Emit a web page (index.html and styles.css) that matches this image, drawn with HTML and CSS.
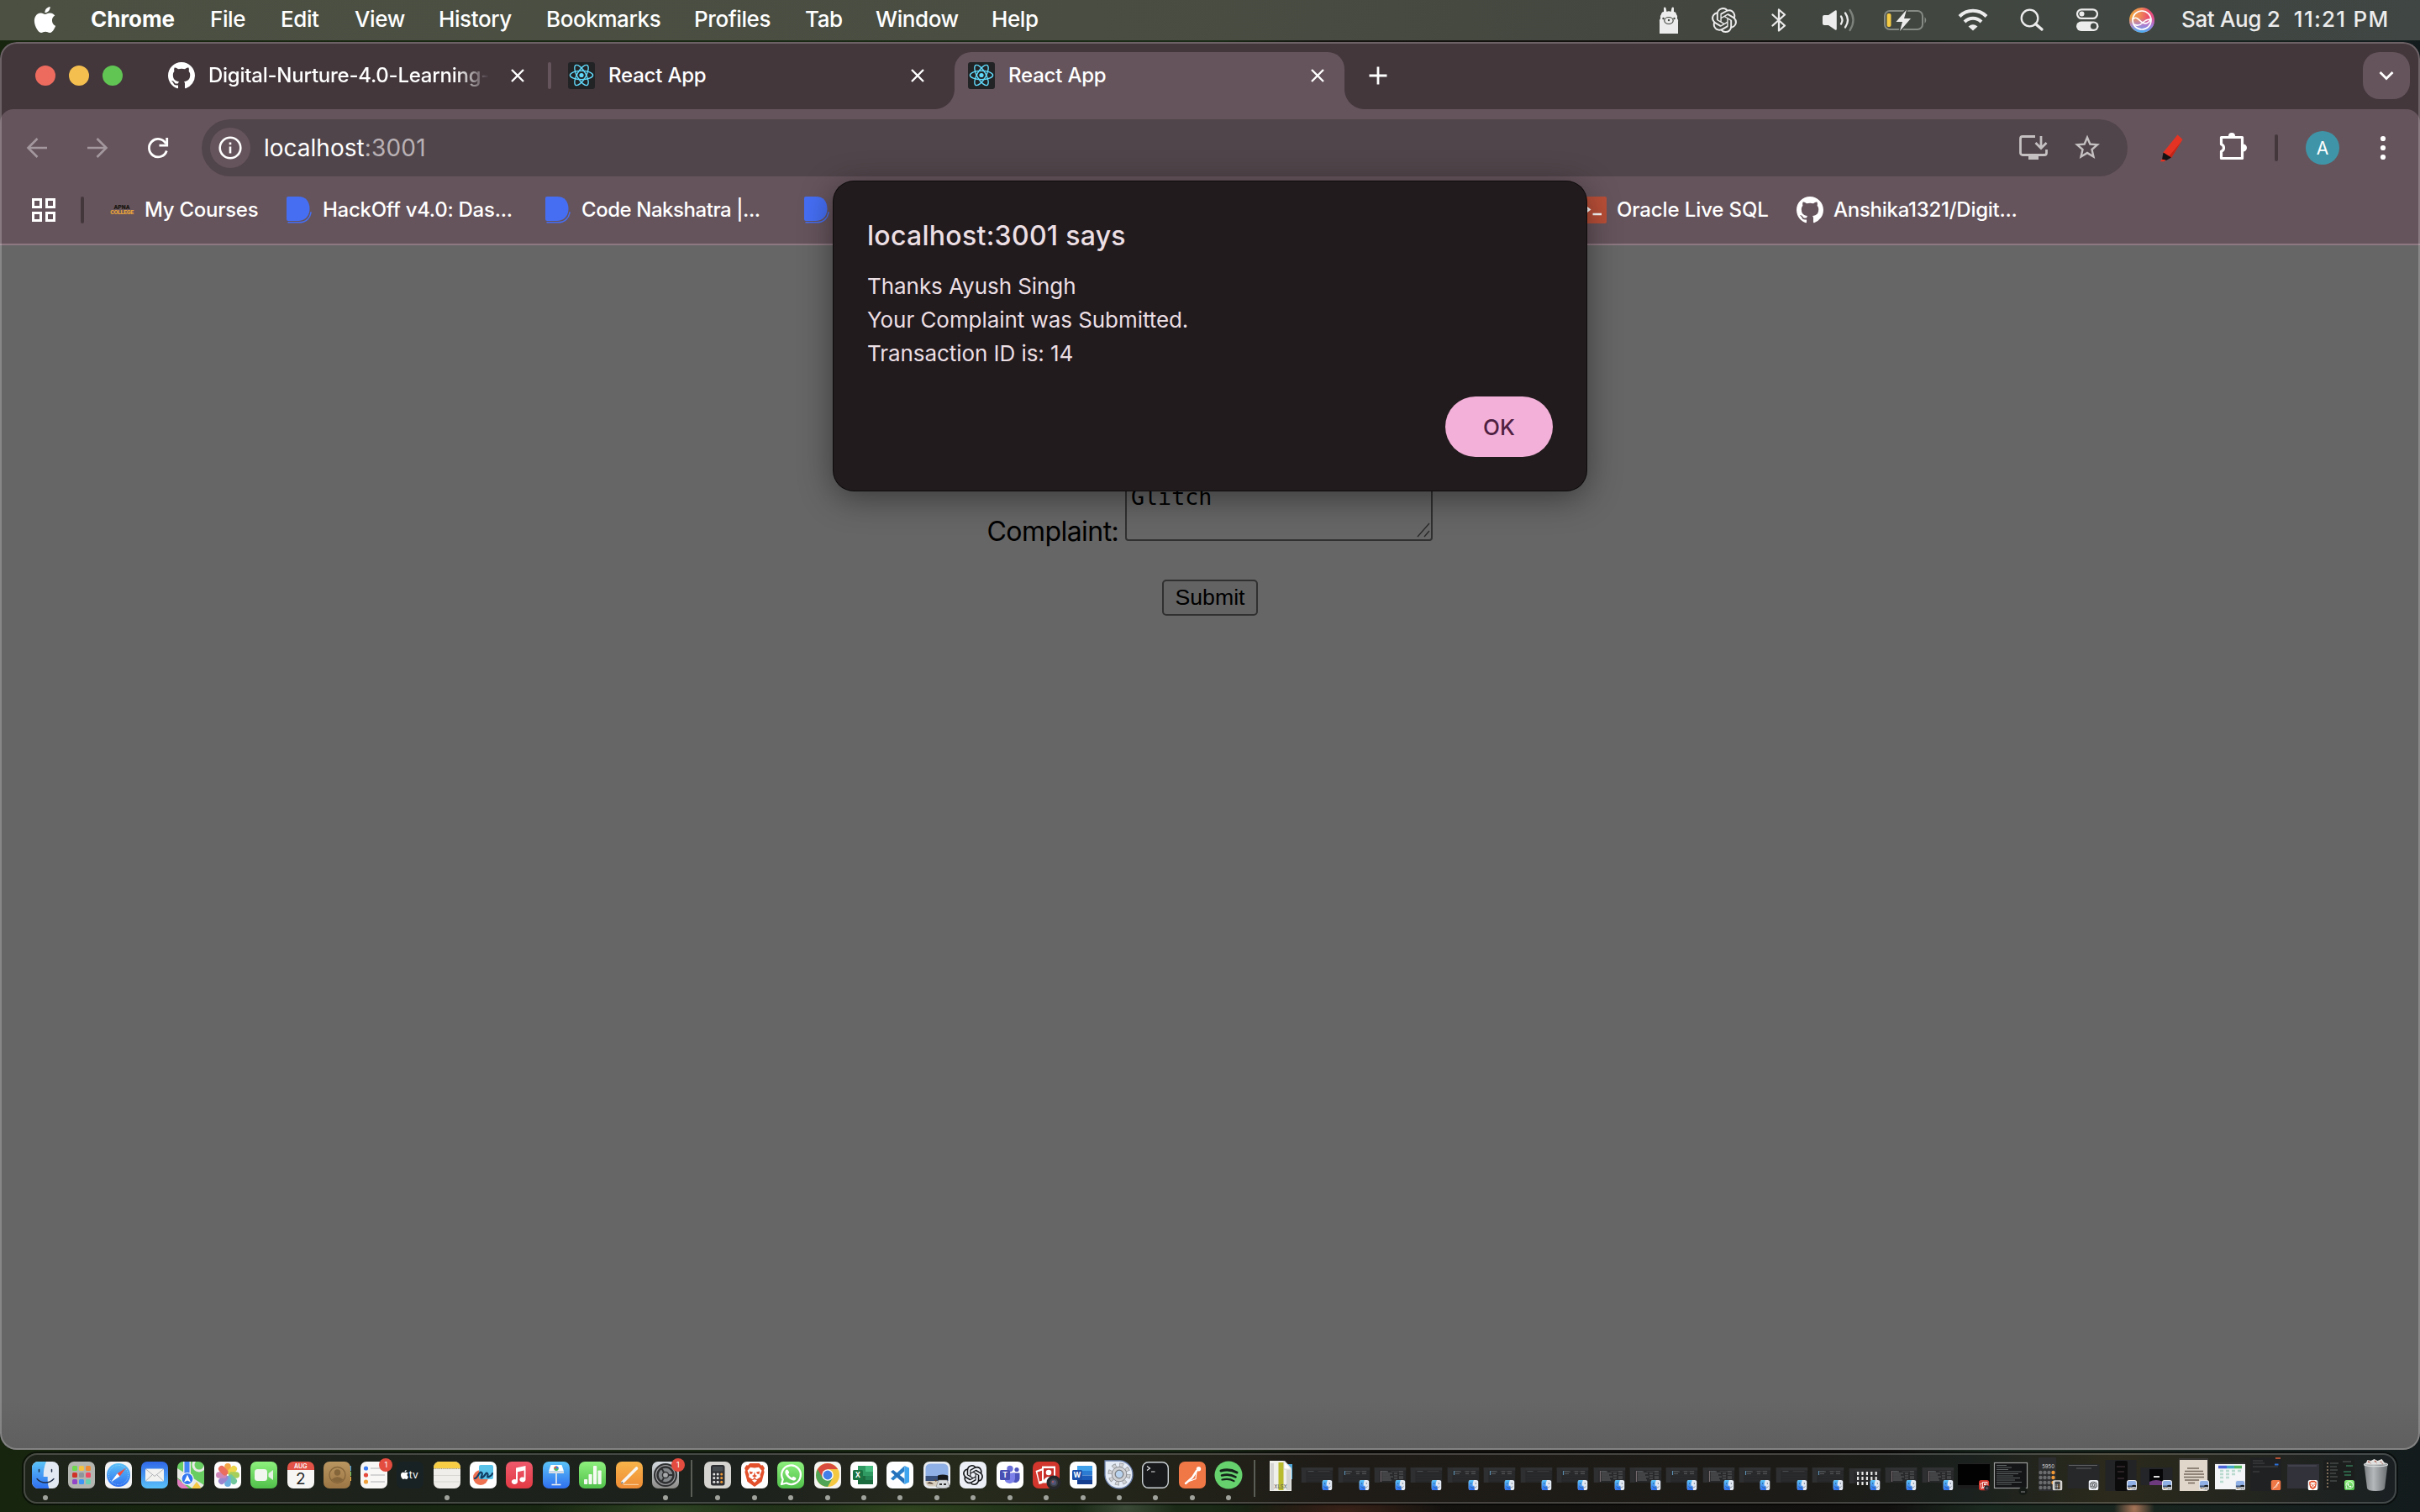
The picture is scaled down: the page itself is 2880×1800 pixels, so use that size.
FILE: index.html
```
<!DOCTYPE html>
<html lang="en">
<head>
<meta charset="utf-8">
<title>React App</title>
<link rel="stylesheet" href="styles.css">
</head>
<body>
<svg class="defs" width="0" height="0" aria-hidden="true">
  <defs>
    <linearGradient id="gBlue" x1="0" y1="0" x2="0" y2="1"><stop offset="0" stop-color="#5bc3f7"/><stop offset="1" stop-color="#2f6ff0"/></linearGradient>
    <linearGradient id="gMail" x1="0" y1="0" x2="0" y2="1"><stop offset="0" stop-color="#3068e8"/><stop offset="1" stop-color="#5ac1fa"/></linearGradient>
    <linearGradient id="gGreen" x1="0" y1="0" x2="0" y2="1"><stop offset="0" stop-color="#8df07d"/><stop offset="1" stop-color="#50c04a"/></linearGradient>
    <linearGradient id="gRed" x1="0" y1="0" x2="0" y2="1"><stop offset="0" stop-color="#ee5a6c"/><stop offset="1" stop-color="#e23a44"/></linearGradient>
    <linearGradient id="gOrange" x1="0" y1="0" x2="0" y2="1"><stop offset="0" stop-color="#f8b44a"/><stop offset="1" stop-color="#ee8c35"/></linearGradient>
    <linearGradient id="gGrey" x1="0" y1="0" x2="0" y2="1"><stop offset="0" stop-color="#d5dbe0"/><stop offset="1" stop-color="#8b8b88"/></linearGradient>
    <linearGradient id="gTan" x1="0" y1="0" x2="0" y2="1"><stop offset="0" stop-color="#b99560"/><stop offset="1" stop-color="#9c7644"/></linearGradient>
    <linearGradient id="gTrash" x1="0" y1="0" x2="1" y2="0"><stop offset="0" stop-color="#7d8183"/><stop offset=".4" stop-color="#b4b8ba"/><stop offset="1" stop-color="#696d70"/></linearGradient>
    <linearGradient id="gSiri" x1="0" y1="0" x2="1" y2=".1"><stop offset="0" stop-color="#eda63c"/><stop offset=".45" stop-color="#ee8a55"/><stop offset=".8" stop-color="#ec4a6c"/><stop offset="1" stop-color="#e0508f"/></linearGradient>
    <linearGradient id="gSiriLow" x1="0" y1="0" x2="0" y2="1"><stop offset=".4" stop-color="#a579ea" stop-opacity="0"/><stop offset=".7" stop-color="#9a86ee" stop-opacity=".8"/><stop offset="1" stop-color="#3fb6f6"/></linearGradient>
    <symbol id="github" viewBox="0 0 16 16"><path fill="#fff" d="M8 0C3.58 0 0 3.58 0 8c0 3.54 2.29 6.53 5.47 7.59.4.07.55-.17.55-.38 0-.19-.01-.82-.01-1.49-2.01.37-2.53-.49-2.69-.94-.09-.23-.48-.94-.82-1.13-.28-.15-.68-.52-.01-.53.63-.01 1.08.58 1.23.82.72 1.21 1.87.87 2.33.66.07-.52.28-.87.51-1.07-1.78-.2-3.64-.89-3.64-3.95 0-.87.31-1.59.82-2.15-.08-.2-.36-1.02.08-2.12 0 0 .67-.21 2.2.82.64-.18 1.32-.27 2-.27s1.36.09 2 .27c1.53-1.04 2.2-.82 2.2-.82.44 1.1.16 1.92.08 2.12.51.56.82 1.27.82 2.15 0 3.07-1.87 3.75-3.65 3.95.29.25.54.73.54 1.48 0 1.07-.01 1.93-.01 2.2 0 .21.15.46.55.38A8.01 8.01 0 0 0 16 8c0-4.42-3.58-8-8-8"/></symbol>
    <symbol id="react" viewBox="0 0 32 32"><rect width="32" height="32" rx="3" fill="#222325"/><g fill="none" stroke="#61dafb" stroke-width="1.400"><ellipse cx="16" cy="15.500" rx="13.600" ry="5.200"/><ellipse cx="16" cy="15.500" rx="13.600" ry="5.200" transform="rotate(60 16 15.500)"/><ellipse cx="16" cy="15.500" rx="13.600" ry="5.200" transform="rotate(120 16 15.500)"/></g><circle cx="16" cy="15.500" r="2.600" fill="#61dafb"/></symbol>
    <symbol id="close" viewBox="0 0 24 24"><path d="M5 5l14 14M19 5L5 19" stroke="#fff" stroke-width="2.400"/></symbol>
    <symbol id="dmark" viewBox="0 0 30 32"><path fill="#456ef3" d="M2 0h12c9 0 13.500 6 13.500 14.500S22 29 14 29H2a2 2 0 0 1-2-2V2a2 2 0 0 1 2-2z"/><path fill="none" stroke="#456ef3" stroke-width="1.500" d="M1.500 30.800H15c8 0 13.500-5 14-12.500"/></symbol>
    <symbol id="openai" viewBox="0 0 24 24"><path d="M22.2819 9.8211a5.9847 5.9847 0 0 0-.5157-4.9108 6.0462 6.0462 0 0 0-6.5098-2.9A6.0651 6.0651 0 0 0 4.9807 4.1818a5.9847 5.9847 0 0 0-3.9977 2.9 6.0462 6.0462 0 0 0 .7427 7.0966 5.98 5.98 0 0 0 .511 4.9107 6.051 6.051 0 0 0 6.5146 2.9001A5.9847 5.9847 0 0 0 13.2599 24a6.0557 6.0557 0 0 0 5.7718-4.2058 5.9894 5.9894 0 0 0 3.9977-2.9001 6.0557 6.0557 0 0 0-.7475-7.0729zm-9.022 12.6081a4.4755 4.4755 0 0 1-2.8764-1.0408l.1419-.0804 4.7783-2.7582a.7948.7948 0 0 0 .3927-.6813v-6.7369l2.02 1.1686a.071.071 0 0 1 .038.052v5.5826a4.504 4.504 0 0 1-4.4945 4.4944zm-9.6607-4.1254a4.4708 4.4708 0 0 1-.5346-3.0137l.142.0852 4.783 2.7582a.7712.7712 0 0 0 .7806 0l5.8428-3.3685v2.3324a.0804.0804 0 0 1-.0332.0615L9.74 19.9502a4.4992 4.4992 0 0 1-6.1408-1.6464zM2.3408 7.8956a4.485 4.485 0 0 1 2.3655-1.9728V11.6a.7664.7664 0 0 0 .3879.6765l5.8144 3.3543-2.0201 1.1685a.0757.0757 0 0 1-.071 0l-4.8303-2.7865A4.504 4.504 0 0 1 2.3408 7.872zm16.5963 3.8558L13.1038 8.364 15.1192 7.2a.0757.0757 0 0 1 .071 0l4.8303 2.7913a4.4944 4.4944 0 0 1-.6765 8.1042v-5.6772a.79.79 0 0 0-.407-.667zm2.0107-3.0231l-.142-.0852-4.7735-2.7818a.7759.7759 0 0 0-.7854 0L9.409 9.2297V6.8974a.0662.0662 0 0 1 .0284-.0615l4.8303-2.7866a4.4992 4.4992 0 0 1 6.6802 4.66zM8.3065 12.863l-2.02-1.1638a.0804.0804 0 0 1-.038-.0567V6.0742a4.4992 4.4992 0 0 1 7.3757-3.4537l-.142.0805L8.704 5.459a.7948.7948 0 0 0-.3927.6813zm1.0976-2.3654l2.602-1.4998 2.6069 1.4998v2.9994l-2.5974 1.4997-2.6067-1.4997Z"/></symbol>
    <symbol id="apple" viewBox="0 0 24 24"><path fill="#fff" d="M12.152 6.896c-.948 0-2.415-1.078-3.96-1.04-2.04.027-3.91 1.183-4.961 3.014-2.117 3.675-.546 9.103 1.519 12.09 1.013 1.454 2.208 3.09 3.792 3.039 1.52-.065 2.09-.987 3.935-.987 1.831 0 2.35.987 3.96.948 1.637-.026 2.676-1.48 3.676-2.948 1.156-1.688 1.636-3.325 1.662-3.415-.039-.013-3.182-1.221-3.22-4.857-.026-3.04 2.48-4.494 2.597-4.559-1.429-2.09-3.623-2.324-4.39-2.376-2-.156-3.675 1.09-4.61 1.09zM15.53 3.83c.843-1.012 1.4-2.427 1.245-3.83-1.207.052-2.662.805-3.532 1.818-.78.896-1.454 2.338-1.273 3.714 1.338.104 2.715-.688 3.559-1.701"/></symbol>
    <symbol id="finder" viewBox="0 0 32 32"><rect width="32" height="32" rx="7.500" fill="#e3e9f2"/><path fill="url(#gBlue)" d="M7.500 0H17c-2.500 6-3.300 11-3.300 18h5c-.2 5 .3 9.500 1.500 14H7.500A7.500 7.500 0 0 1 0 24.500v-17A7.500 7.500 0 0 1 7.500 0z"/><path d="M8.500 9.500v2.600M23.500 9.500v2.600" stroke="#1c2b45" stroke-width="1.500" stroke-linecap="round"/><path d="M6 20.500c5 6 15 6 20 0" fill="none" stroke="#1c2b45" stroke-width="1.300" stroke-linecap="round"/></symbol>
    <symbol id="shot" viewBox="0 0 32 32"><rect width="32" height="32" rx="7" fill="#e9ecf0"/><path fill="#8fb0e6" d="M2.500 8a5.500 5.500 0 0 1 5.500-5.500h16A5.500 5.500 0 0 1 29.500 8v9h-27z"/><path fill="#37517c" d="M2.500 17h27v6h-27z"/><path fill="#d8cfc0" d="M2.500 23h27v1a5.500 5.500 0 0 1-5.500 5.500H8A5.500 5.500 0 0 1 2.500 24z"/><path fill="#5b4a3c" d="M4 26l3-2 3 1 2 2zM12 21l4 1-1 2z"/><path fill="#16181a" d="M17 16.500q6-2 12 0V22H17z"/><path fill="#d7dadd" stroke="#777" stroke-width=".6" d="M18 22h10l3 8q-8 3.500-16 0z"/><path fill="#333" d="M19 26h3v2h-3zM24 26h3v2h-3z"/></symbol>
    <symbol id="brave" viewBox="0 0 32 32"><rect width="32" height="32" rx="7" fill="#fff"/><path fill="#e2502c" d="M10.500 2h11l2.300 2.500 2-.3L28 8l-1 2 .6 2.600-3 11.200L16 30l-8.600-6.200-3-11.200L5 10 4 8l2.200-3.800 2 .3z"/><path fill="#fff" d="M16 7.500l5-.8 3.500 4-2 5 .5 2.500-4.500 3L16 19l-2.500 2.200-4.500-3 .5-2.500-2-5 3.500-4z"/><path fill="#e2502c" d="M10 11.500l4 1-1 2-2.500.5zM22 11.500l-4 1 1 2 2.500.5zM16 12l1 4 2 1-3 2-3-2 2-1z"/><path fill="#fff" d="M16 21l3 1.600-3 2.400-3-2.400z"/></symbol>
    <symbol id="whatsapp" viewBox="0 0 32 32"><rect width="32" height="32" rx="7" fill="url(#gGreen)"/><path fill="none" stroke="#fff" stroke-width="2.300" stroke-linejoin="round" d="M5 27l1.700-5.800A11.300 11.300 0 1 1 11 25.500z"/><path fill="#fff" d="M12.300 9.800c-.6-.5-1.500-.4-2 .2-2 2.500-.4 6 2.300 8.800s6 4.600 8.700 3.100c.9-.5 1.300-1.700 1-2.500-.1-.4-2.700-1.700-3.200-1.700-.7 0-1.200 1.500-1.700 1.500-1.300-.3-4-2.800-4.300-4.200 0-.5 1.200-1 1.100-1.900-.1-.6-1.200-2.800-1.900-3.300z"/></symbol>
    <symbol id="calc" viewBox="0 0 32 32"><rect width="32" height="32" rx="7" fill="#d5d4d1"/><rect x="8" y="4" width="16.500" height="24.500" rx="2.500" fill="#2e3033"/><rect x="10" y="6" width="12.500" height="5.500" rx="1" fill="#464b50"/><g fill="#e4e4e4"><circle cx="11.800" cy="15" r="1.500"/><circle cx="16.200" cy="15" r="1.500"/><circle cx="11.800" cy="19.600" r="1.500"/><circle cx="16.200" cy="19.600" r="1.500"/><circle cx="11.800" cy="24.200" r="1.500"/><circle cx="16.200" cy="24.200" r="1.500"/></g><g fill="#f19a37"><circle cx="20.700" cy="15" r="1.500"/><circle cx="20.700" cy="19.600" r="1.500"/><circle cx="20.700" cy="24.200" r="1.500"/></g></symbol>
    <symbol id="gpt" viewBox="0 0 32 32"><rect width="32" height="32" rx="7" fill="#edf1f7"/><use href="#openai" x="4" y="4" width="24" height="24" fill="#15171a"/></symbol>
    <symbol id="booth" viewBox="0 0 34 34"><rect width="32" height="32" rx="7" fill="#d2362d"/><path fill="#fff" d="M3.500 11l8-3v18l-4 1z"/><path fill="#d2362d" d="M5.500 12.500l6-2v12l-3.500 1z"/><rect x="11" y="5.500" width="16" height="20" fill="#fff"/><rect x="13" y="8" width="12" height="14" fill="#c5302a"/><circle cx="19" cy="13" r="3.300" fill="#fff"/><path fill="#fff" d="M13 22q6-8 12 0z"/><circle cx="25" cy="25" r="8.500" fill="#26272a"/><circle cx="25" cy="25" r="5" fill="#3c4046"/><circle cx="25" cy="25" r="3" fill="#50557a"/><circle cx="24" cy="24" r="1.200" fill="#a65a60"/></symbol>
    <symbol id="postman" viewBox="0 0 32 32"><rect width="32" height="32" rx="7" fill="#f07746"/><circle cx="23.500" cy="8.700" r="2.700" fill="#fff"/><path d="M21 11l-5 8-8 7" fill="none" stroke="#fff" stroke-width="2.400" stroke-linecap="round"/><path d="M21 11.500l-1 9-8 3" fill="none" stroke="#fff" stroke-width="1.100"/></symbol>
    <symbol id="win" viewBox="0 0 38 18"><rect width="38" height="18" fill="#262728"/><rect width="38" height="3.500" fill="#303132"/><rect width="6" height="18" fill="#2e2f30"/><path d="M7 6h30M7 9h30M7 12h30M7 15h30" stroke="#303132" stroke-width=".8"/><path d="M8 4.500h7" stroke="#50575c" stroke-width=".8"/><path d="M20 4.500h14" stroke="#3d3e3f" stroke-width=".8"/></symbol>
    <symbol id="winA" viewBox="0 0 43 60"><use href="#win" x="2.500" y="17" width="38" height="18"/><use href="#finder" x="27.500" y="32" width="12" height="12"/></symbol>
    <symbol id="winB" viewBox="0 0 43 60"><use href="#win" x="2.500" y="17" width="38" height="18"/><path d="M10.500 21v5" stroke="#5b8fb0" stroke-width="1.200"/><path d="M12 22h7M12 24.500h5M24 22h4M24 24.500h4M31 22h5M31 24.500h5" stroke="#545658" stroke-width="1"/><use href="#finder" x="27.500" y="32" width="12" height="12"/></symbol>
    <symbol id="winC" viewBox="0 0 43 60"><use href="#win" x="2.500" y="17" width="38" height="18"/><path d="M10.500 21v13" stroke="#776c6f" stroke-width="1.200"/><path d="M12 22h7M12 24h12M12 26h9M12 28h13M12 30h10M12 32h11M26 24h4M26 27h4M26 30h4M32 22h5M32 25h5M32 28h5M32 30h5" stroke="#5c5e60" stroke-width="1"/><use href="#finder" x="27.500" y="32" width="12" height="12"/></symbol>
  </defs>
</svg>

<header class="menubar">
  <svg class="menubar-apple" viewBox="0 0 24 24"><use href="#apple"/></svg>
  <nav class="menus">
    <span class="menu menu-app">Chrome</span>
    <span class="menu menu-file">File</span>
    <span class="menu menu-edit">Edit</span>
    <span class="menu menu-view">View</span>
    <span class="menu menu-history">History</span>
    <span class="menu menu-bookmarks">Bookmarks</span>
    <span class="menu menu-profiles">Profiles</span>
    <span class="menu menu-tab">Tab</span>
    <span class="menu menu-window">Window</span>
    <span class="menu">Help</span>
  </nav>
  <div class="status">
    <svg width="66" height="48" viewBox="0 0 66 48"><path fill="#ececec" d="M22 40V27q-1-3 1-5-1-3 1-5 .5-3 3-3V9.500q1-2 2.500 0l1 4.500q2.500-1.500 5 0l1-4.500q1.500-2 2.500 0V14q2.500 0 3 3 2 2 1 5 2 2 1 5v13z"/><ellipse cx="33" cy="24.500" rx="5.200" ry="4" fill="none" stroke="#41463f" stroke-width="1.200"/><circle cx="33" cy="24" r="1.200" fill="#41463f"/><circle cx="26.500" cy="22" r="1.200" fill="#41463f"/><circle cx="39.500" cy="22" r="1.200" fill="#41463f"/></svg>
    <svg width="66" height="48" viewBox="0 0 66 48"><use href="#openai" x="18" y="9" width="30" height="30" fill="#ececec"/></svg>
    <svg width="64" height="48" viewBox="0 0 64 48"><path d="M24.500 17.500l14.500 13-7 6V11.500l7 6-14.500 13" fill="none" stroke="#ececec" stroke-width="2.300" stroke-linejoin="round" stroke-linecap="round"/></svg>
    <svg width="78" height="48" viewBox="0 0 78 48"><path fill="#ececec" d="M22 18h5l8-5.500q1.800-.8 1.800 1v21q0 1.800-1.800 1l-8-5.500h-5q-2 0-2-2v-8q0-2 2-2z"/><g fill="none" stroke-width="2.300" stroke-linecap="round"><path stroke="#ececec" d="M42 19.500q3 4.500 0 9M47 15.500q6 8.500 0 17"/><path stroke="#7e827c" d="M52.500 12q8 12 0 24"/></g></svg>
    <svg width="80" height="48" viewBox="0 0 80 48"><rect x="16" y="13" width="45" height="22" rx="6" fill="none" stroke="#868a85" stroke-width="2"/><path fill="#868a85" d="M63.500 20q3.500 4 0 8z"/><rect x="18.500" y="16" width="5" height="16" rx="2" fill="#f5cb45"/><path d="M42 11.500L29.500 26h7.500l-3 11L47 22h-8z" fill="#ececec" stroke="#434843" stroke-width="3" paint-order="stroke"/></svg>
    <svg width="82" height="48" viewBox="0 0 82 48"><g fill="none" stroke="#ececec" stroke-width="4"><path d="M25 19.500a22.500 22.500 0 0 1 32 0"/><path d="M31 26a14 14 0 0 1 20 0"/></g><path fill="#ececec" d="M35.500 31.500q5.500-4.500 11 0L41 36.500z"/></svg>
    <svg width="56" height="48" viewBox="0 0 56 48"><circle cx="26.500" cy="21.500" r="9.800" fill="none" stroke="#ececec" stroke-width="2.300"/><path d="M33.500 28.500l7.500 6.500" stroke="#ececec" stroke-width="3.400" stroke-linecap="round"/></svg>
    <svg width="78" height="48" viewBox="0 0 78 48"><rect x="27" y="11.300" width="24" height="10.600" rx="5.300" fill="none" stroke="#ececec" stroke-width="2.200"/><circle cx="32.500" cy="16.600" r="3" fill="#ececec"/><rect x="26" y="25.500" width="26.500" height="11.500" rx="5.750" fill="#ececec"/><circle cx="46.500" cy="31.200" r="3.600" fill="#414743"/></svg>
    <svg width="52" height="48" viewBox="0 0 52 48"><circle cx="26" cy="24" r="15" fill="url(#gSiri)"/><circle cx="26" cy="24" r="15" fill="url(#gSiriLow)"/><circle cx="26" cy="24" r="11" fill="none" stroke="#fff" stroke-width="1.700"/><path d="M15 23c5-5 8 2 12 4s8 0 9-4c-4 0-6 1-9 4s-7 4-10 2" fill="none" stroke="#fff" stroke-width="1.700"/></svg>
    <span class="clock"><span>Sat Aug 2</span><span class="time">11:21 PM</span></span>
  </div>
</header>

<main class="window">
  <div class="tabstrip">
    <div class="lights"><i class="red"></i><i class="yellow"></i><i class="green"></i></div>
    <div class="tab">
      <svg class="favicon"><use href="#github"/></svg>
      <span class="tab-title fade">Digital-Nurture-4.0-Learning-</span>
      <svg class="tab-close"><use href="#close"/></svg>
      <span class="tab-divider"></span>
    </div>
    <div class="tab">
      <svg class="favicon"><use href="#react"/></svg>
      <span class="tab-title">React App</span>
      <svg class="tab-close"><use href="#close"/></svg>
    </div>
    <div class="tab active">
      <svg class="favicon"><use href="#react"/></svg>
      <span class="tab-title">React App</span>
      <svg class="tab-close"><use href="#close"/></svg>
    </div>
    <svg class="new-tab" viewBox="0 0 24 24"><path d="M12 1.500v21M1.500 12h21" stroke="#fff" stroke-width="2.800"/></svg>
    <button class="tab-search" aria-label="Search tabs"><svg width="24" height="24" viewBox="0 0 24 24"><path d="M4.500 8l7.500 7.500L19.500 8" fill="none" stroke="#fff" stroke-width="2.800"/></svg></button>
  </div>

  <div class="toolbar">
    <svg class="tool" viewBox="0 0 72 72"><path d="M48 36H26M36.500 25L25.500 36l11 11" fill="none" stroke="#a3989d" stroke-width="2.600"/></svg>
    <svg class="tool" viewBox="0 0 72 72"><path d="M24 36h22M35.500 25l11 11-11 11" fill="none" stroke="#a3989d" stroke-width="2.600"/></svg>
    <svg class="tool" viewBox="0 0 72 72"><path d="M45.500 31A10.700 10.700 0 1 0 46.300 39.500" fill="none" stroke="#fff" stroke-width="2.800"/><path d="M46.700 24v9.200H37.500" fill="none" stroke="#fff" stroke-width="2.800"/></svg>
    <div class="omnibox">
      <span class="site-info"><svg width="28" height="28" viewBox="0 0 28 28"><circle cx="14" cy="14" r="12.300" fill="none" stroke="#fff" stroke-width="2.600"/><path d="M14 12.500v8M14 7.500v2.800" stroke="#fff" stroke-width="2.600"/></svg></span>
      <span class="url">localhost<span class="port">:3001</span></span>
      <svg class="omni-icon" viewBox="0 0 64 64"><path d="M34 18.500H19a2.500 2.500 0 0 0-2.500 2.500v17a2.500 2.500 0 0 0 2.500 2.500h26a2.500 2.500 0 0 0 2.500-2.500v-4" fill="none" stroke="#c4bfc1" stroke-width="2.800"/><path fill="#c4bfc1" d="M26 41h12v5H26z"/><path d="M41 18v13M34.500 26l6.500 6.500 6.500-6.500" fill="none" stroke="#c4bfc1" stroke-width="2.800"/></svg>
      <svg class="omni-icon" viewBox="0 0 64 64"><path transform="translate(14 13.500) scale(1.500)" fill="#c4bfc1" d="M22 9.240l-7.190-.62L12 2 9.190 8.630 2 9.240l5.460 4.730L5.820 21 12 17.270 18.180 21l-1.630-7.030L22 9.240zM12 15.400l-3.760 2.270 1-4.280-3.320-2.880 4.380-.38L12 6.100l1.710 4.040 4.380.38-3.320 2.880 1 4.280L12 15.400z"/></svg>
    </div>
    <svg class="tool tool-pen" viewBox="0 0 73 72"><path fill="#e53323" d="M43.500 20.500l6 5.500L36 48 26 42z"/><path fill="#c22417" d="M48 28.500l1.500-2.500L36 48l-3-1.800z"/><path fill="#151213" d="M26.500 41.500l9.500 6-6 3.500-5-1z"/><path fill="#e53323" d="M24.500 49.500l5 1-2 1.700h-4.500z"/></svg>
    <svg class="tool" viewBox="0 0 72 72"><path d="M22.500 23.500h25v25h-25v-8.200a4.600 4.600 0 0 0 0-8.600z" fill="none" stroke="#fff" stroke-width="3.200" stroke-linejoin="round"/><path fill="#fff" d="M31 23v-1a4 4 0 0 1 8 0v1zM48 31.500h.5a4.500 4.500 0 0 1 0 9H48z"/></svg>
    <span class="tool-divider"></span>
    <span class="avatar">A</span>
    <svg class="tool tool-more" viewBox="0 0 72 72"><g fill="#fff"><circle cx="36" cy="25" r="3.100"/><circle cx="36" cy="36" r="3.100"/><circle cx="36" cy="47" r="3.100"/></g></svg>
  </div>

  <div class="bookmarks">
    <svg class="apps" width="28" height="28" viewBox="0 0 28 28"><g fill="none" stroke="#fff" stroke-width="3"><rect x="1.500" y="1.500" width="9" height="9"/><rect x="17.500" y="1.500" width="9" height="9"/><rect x="1.500" y="17.500" width="9" height="9"/><rect x="17.500" y="17.500" width="9" height="9"/></g></svg>
    <span class="bm-divider"></span>
    <div class="bm bm-courses"><span class="apna"><em>APNA</em><em>COLLEGE</em></span><span class="bm-label">My Courses</span></div>
    <div class="bm bm-mid"><svg class="dmark"><use href="#dmark"/></svg><span class="bm-label">HackOff v4.0: Das...</span></div>
    <div class="bm bm-mid"><svg class="dmark"><use href="#dmark"/></svg><span class="bm-label bm-tight">Code Nakshatra |...</span></div>
    <div class="bm bm-wide"><svg class="dmark"><use href="#dmark"/></svg></div>
    <div class="bm bm-oracle"><svg width="32" height="32" viewBox="0 0 32 32"><rect width="32" height="32" rx="2" fill="#b94f38"/><path d="M5 10.500l6.500 5L5 20.500M15.500 21H26" fill="none" stroke="#fff" stroke-width="2.400"/></svg><span class="bm-label bm-loose">Oracle Live SQL</span></div>
    <div class="bm"><svg width="32" height="32"><use href="#github"/></svg><span class="bm-label">Anshika1321/Digit...</span></div>
  </div>

  <section class="page">
    <div class="complaint"><label for="complaint">Complaint:</label><div class="textarea" id="complaint">Glitch<svg class="grip" width="16" height="18" viewBox="0 0 16 18"><path d="M1 17L15 1M9 17l6-7" stroke="#2b2b2b" stroke-width="1.400"/></svg></div></div>
    <div class="submit">Submit</div>
  </section>

  <div class="dialog" role="dialog">
    <h1>localhost:3001 says</h1>
    <p>Thanks Ayush Singh</p>
    <p>Your Complaint was Submitted.</p>
    <p>Transaction ID is: 14</p>
    <span class="ok">OK</span>
  </div>
</main>

<footer class="dock">
  <div class="app running"><svg><use href="#finder"/></svg></div>
  <div class="app"><svg viewBox="0 0 32 32"><rect width="32" height="32" rx="7" fill="#b3b6b0"/><g><rect x="5" y="5" width="6" height="6" rx="1.500" fill="#6ed84f"/><rect x="13" y="5" width="6" height="6" rx="1.500" fill="#f3c341"/><rect x="21" y="5" width="6" height="6" rx="1.500" fill="#ee8a35"/><rect x="5" y="13" width="6" height="6" rx="1.500" fill="#cf3328"/><rect x="13" y="13" width="6" height="6" rx="1.500" fill="#8f959b"/><rect x="21" y="13" width="6" height="6" rx="1.500" fill="#ee4b63"/><rect x="5" y="21" width="6" height="6" rx="1.500" fill="#9346c8"/><rect x="13" y="21" width="6" height="6" rx="1.500" fill="#3f95f5"/><rect x="21" y="21" width="6" height="6" rx="1.500" fill="#69d1b0"/></g></svg></div>
  <div class="app"><svg viewBox="0 0 32 32"><rect width="32" height="32" rx="7" fill="#f3f3f3"/><circle cx="16" cy="16" r="14" fill="url(#gBlue)"/><circle cx="16" cy="16" r="11.500" fill="none" stroke="#bfe2fb" stroke-width="1" stroke-dasharray=".7 1.700"/><path fill="#f24c3e" d="M25 7.500L14.500 14.200l3 3.400z"/><path fill="#fff" d="M7 24.500l7.500-10.300 3 3.400z"/></svg></div>
  <div class="app"><svg viewBox="0 0 32 32"><rect width="32" height="32" rx="7" fill="url(#gMail)"/><rect x="5" y="8.500" width="22" height="15" rx="1.500" fill="#f2f2f0"/><path d="M5.500 9l10.500 8.500L26.500 9M5.500 23l8-7.500M26.500 23l-8-7.500" fill="none" stroke="#a8adb0" stroke-width=".9"/></svg></div>
  <div class="app"><svg viewBox="0 0 32 32"><clipPath id="cm"><rect width="32" height="32" rx="7"/></clipPath><g clip-path="url(#cm)"><path fill="#69ce62" d="M0 0h32v32H0z"/><path fill="#e9e9e6" d="M0 8l32 20v4H18L0 19z"/><path fill="#e27cc0" d="M0 20l14 12H0z"/><path fill="#f5c845" d="M17 32l6-8 6 8z"/><path fill="#e9e9e6" d="M7 0h9v14H7z"/><path fill="#4285f4" d="M8.500 0h6v18h-6z"/><circle cx="26" cy="4" r="7" fill="none" stroke="#e9e9e6" stroke-width="3"/><circle cx="12" cy="20.500" r="7.600" fill="#fff"/><circle cx="12" cy="20.500" r="6.500" fill="#3478f0"/><path fill="#fff" d="M12 15.500l4 9-4-2-4 2z"/></g></svg></div>
  <div class="app"><svg viewBox="0 0 32 32"><rect width="32" height="32" rx="7" fill="#fdfdfd"/><g opacity=".88"><rect x="12.200" y="2" width="7.600" height="13" rx="3.800" fill="#f39a2d"/><rect x="12.200" y="2" width="7.600" height="13" rx="3.800" fill="#ecd233" transform="rotate(45 16 16)"/><rect x="12.200" y="2" width="7.600" height="13" rx="3.800" fill="#9ac845" transform="rotate(90 16 16)"/><rect x="12.200" y="2" width="7.600" height="13" rx="3.800" fill="#5fbf8f" transform="rotate(135 16 16)"/><rect x="12.200" y="2" width="7.600" height="13" rx="3.800" fill="#58a5dd" transform="rotate(180 16 16)"/><rect x="12.200" y="2" width="7.600" height="13" rx="3.800" fill="#8f77c9" transform="rotate(225 16 16)"/><rect x="12.200" y="2" width="7.600" height="13" rx="3.800" fill="#c877ae" transform="rotate(270 16 16)"/><rect x="12.200" y="2" width="7.600" height="13" rx="3.800" fill="#e85a48" transform="rotate(315 16 16)"/></g></svg></div>
  <div class="app"><svg viewBox="0 0 32 32"><rect width="32" height="32" rx="7" fill="url(#gGreen)"/><rect x="5" y="9" width="15" height="14" rx="3.500" fill="#f1f6ef"/><path fill="#e6efe4" d="M21.500 14l5.500-4v12l-5.500-4z"/></svg></div>
  <div class="app calendar"><span>AUG</span><b>2</b></div>
  <div class="app"><svg viewBox="0 0 32 32"><path fill="#3b9ad8" d="M29 5h4v6h-4z"/><path fill="#63c25b" d="M29 12h4v5h-4z"/><path fill="#eaa83c" d="M29 18h4v5h-4z"/><rect width="32" height="32" rx="7" fill="url(#gTan)"/><circle cx="16.500" cy="16" r="9.500" fill="none" stroke="#85653a" stroke-width="1.300"/><circle cx="16.500" cy="13" r="3.700" fill="#85653a"/><path fill="#85653a" d="M9.500 21.500q7-6.500 14 0-7 6-14 0z"/></svg></div>
  <div class="app"><svg viewBox="0 0 32 32"><rect width="32" height="32" rx="7" fill="#f8f7f5"/><circle cx="6.500" cy="8" r="2.600" fill="#3c7bf0"/><circle cx="6.500" cy="16" r="2.600" fill="#e4493c"/><circle cx="6.500" cy="24" r="2.600" fill="#efa03c"/><path d="M12 8h17M12 16h17M12 24h17" stroke="#c9c9c9" stroke-width="1.300"/></svg><span class="badge">1</span></div>
  <div class="app"><svg viewBox="0 0 32 32"><rect width="32" height="32" rx="7" fill="#182225"/><use href="#apple" x="4" y="10" width="11" height="11"/><text x="14.800" y="19.800" class="tv">tv</text></svg></div>
  <div class="app running"><svg viewBox="0 0 32 32"><rect width="32" height="32" rx="7" fill="#efeeea"/><path fill="#f6cd45" d="M0 8V7a7 7 0 0 1 7-7h18a7 7 0 0 1 7 7v1z"/><path d="M0 8.500h32" stroke="#98917c" stroke-dasharray="1 .8"/><path d="M0 16.500h32M0 24h32" stroke="#d2d1cc" stroke-width=".8"/></svg></div>
  <div class="app"><svg viewBox="0 0 32 32"><rect width="32" height="32" rx="7" fill="#fff"/><circle cx="13" cy="19" r="9" fill="#ee7152"/><path fill="#59c3ea" d="M11 6q0-2 2-2h13q2 0 2 2v13q0 2-2 2H13q-2 0-2-2z"/><path d="M6 20c4 0 5-9 8-7s-3 8 1 6 4-7 6-5-2 6 2 4 4-4 4-4" fill="none" stroke="#123d63" stroke-width="2.200" stroke-linecap="round"/></svg></div>
  <div class="app"><svg viewBox="0 0 32 32"><rect width="32" height="32" rx="7" fill="url(#gRed)"/><path fill="#fff" d="M12 7.500l11.500-2.500v16.500a3.600 3 0 1 1-1.800-2.700V10.500L14 12.300V24a3.600 3 0 1 1-2-2.700z"/></svg></div>
  <div class="app"><svg viewBox="0 0 32 32"><rect width="32" height="32" rx="7" fill="url(#gBlue)"/><path fill="#fff" d="M9.500 4h13l2.500 7.500H7z"/><path fill="#d7dde2" d="M7 11.500h18v2.500H7z"/><path d="M16 14v12.500" stroke="#eee" stroke-width="1.600"/><path d="M10.500 27.500h11" stroke="#eee" stroke-width="1.600"/><circle cx="16" cy="8.300" r="2.700" fill="#45b864"/><path fill="#e2574c" d="M16 8.300V5.600a2.700 2.700 0 0 0-2.700 2.700z"/><path fill="#3f7cf0" d="M16 8.300v-2.700a2.700 2.700 0 0 1 2.700 2.700z"/></svg></div>
  <div class="app"><svg viewBox="0 0 32 32"><rect width="32" height="32" rx="7" fill="url(#gGreen)"/><g fill="#f5faf3"><rect x="6" y="21" width="4.200" height="6" rx=".8"/><rect x="11.500" y="15" width="4.200" height="12" rx=".8"/><rect x="17" y="5" width="4.200" height="22" rx=".8"/><rect x="22.500" y="10.500" width="4.200" height="16.500" rx=".8"/></g></svg></div>
  <div class="app"><svg viewBox="0 0 32 32"><rect width="32" height="32" rx="7" fill="url(#gOrange)"/><path d="M8 24.500L24.500 8" stroke="#f7f5f2" stroke-width="3.600" stroke-linecap="round"/><path d="M6 26.500l3-1-2-2z" fill="#777"/><path d="M9 27.300h18" stroke="#fbd9b0" stroke-width="1"/></svg></div>
  <div class="app running"><svg viewBox="0 0 32 32"><rect width="32" height="32" rx="7" fill="url(#gGrey)"/><circle cx="16" cy="16" r="13" fill="#9a9c9d" stroke="#2e3031" stroke-width="2"/><circle cx="16" cy="16" r="9.500" fill="#85888a" stroke="#2e3031" stroke-width="2.500"/><path d="M16 16h9.500M16 16l-5-8.500M16 16l-5 8.500" stroke="#2e3031" stroke-width="2"/><circle cx="16" cy="16" r="3.600" fill="#a9abac" stroke="#2e3031" stroke-width="1.500"/></svg><span class="badge">1</span></div>
  <span class="dock-divider"></span>
  <div class="app running"><svg><use href="#calc"/></svg></div>
  <div class="app running"><svg><use href="#brave"/></svg></div>
  <div class="app running"><svg><use href="#whatsapp"/></svg></div>
  <div class="app running"><svg viewBox="0 0 32 32"><rect width="32" height="32" rx="7" fill="#f4f4f2"/><circle cx="16" cy="16" r="14" fill="#f5c842"/><path fill="#4fa455" d="M16 16L3.880 9A14 14 0 0 0 16 30l6-10.500z"/><path fill="#d94b3d" d="M16 9h12.100A14 14 0 0 0 3.880 9l6 10z"/><circle cx="16" cy="16" r="6.800" fill="#fff"/><circle cx="16" cy="16" r="5.400" fill="#437fe8"/></svg></div>
  <div class="app running"><svg viewBox="0 0 32 32"><rect width="32" height="32" rx="7" fill="#fff"/><path fill="#2f9b62" d="M9 5h18v22H9z"/><path fill="#48bd80" d="M18 5h9v7h-9z"/><path fill="#1c6b3f" d="M9 17h18v10H9z"/><path fill="#268554" d="M18 17h9v5h-9z"/><rect x="3" y="10" width="12" height="12" rx="1.500" fill="#1a7343"/><text x="9" y="19" class="letter">X</text></svg></div>
  <div class="app running"><svg viewBox="0 0 32 32"><rect width="32" height="32" rx="7" fill="#fff"/><path fill="#2a7fc9" d="M21.500 5v6.500L8 22.500l-3-2.200L21.500 5z"/><path fill="#2471ba" d="M21.500 27v-6.500L8 10l-3 2L21.500 27z"/><path fill="#3ea5ee" d="M21.500 5l5.500 2.500v17L21.500 27z"/></svg></div>
  <div class="app running"><svg><use href="#shot"/></svg></div>
  <div class="app running"><svg><use href="#gpt"/></svg></div>
  <div class="app running"><svg viewBox="0 0 32 32"><rect width="32" height="32" rx="7" fill="#fff"/><circle cx="16" cy="8.500" r="3.700" fill="#6a6fd8"/><circle cx="24" cy="9.500" r="2.600" fill="#4d54bb"/><path fill="#4d54bb" d="M19 13.500h8.500v7a5 5 0 0 1-8.500 3z"/><path fill="#7b81e8" d="M10 13.500h12V20a6.500 6.500 0 0 1-12 3z"/><rect x="4" y="10" width="12" height="12" rx="1.500" fill="#4850b4"/><text x="10" y="19" class="letter">T</text></svg></div>
  <div class="app running"><svg><use href="#booth" width="34" height="34"/></svg></div>
  <div class="app running"><svg viewBox="0 0 32 32"><rect width="32" height="32" rx="7" fill="#fff"/><path fill="#41a0ea" d="M9 5h18v6H9z"/><path fill="#2b7bd3" d="M9 11h18v5.500H9z"/><path fill="#1c5cb8" d="M9 16.500h18V22H9z"/><path fill="#163f90" d="M9 22h18v5H9z"/><rect x="3" y="10" width="12" height="12" rx="1.500" fill="#1b52ab"/><text x="9" y="19" class="letter">W</text></svg></div>
  <div class="app running"><svg viewBox="0 0 32 32"><path fill="#e6ecf6" stroke="#6c82ad" stroke-width="1.300" d="M-1-1h18A16.500 16.500 0 1 1-1 16z"/><circle cx="16" cy="15" r="11" fill="none" stroke="#8b8f95" stroke-width="5" stroke-dasharray="4.500 4.140"/><circle cx="16" cy="15" r="11" fill="none" stroke="#cfd1d4" stroke-width="3.600" stroke-dasharray="3.500 5.140" stroke-dashoffset="-.5"/><circle cx="16" cy="15" r="8.800" fill="#cfd1d4" stroke="#8b8f95" stroke-width="1"/><circle cx="16" cy="15" r="4.800" fill="#b9d3ef" stroke="#7c8086" stroke-width="1.300"/></svg></div>
  <div class="app running"><svg viewBox="0 0 32 32"><rect x=".7" y=".7" width="30.600" height="30.600" rx="7" fill="#17191b" stroke="#cdd3d6" stroke-width="1.400"/><path d="M6 5.500l3.500 2.500L6 10.500M11 12h4.500" fill="none" stroke="#e8e8e8" stroke-width="1.200"/></svg></div>
  <div class="app running"><svg><use href="#postman"/></svg></div>
  <div class="app running"><svg viewBox="0 0 32 32"><circle cx="16" cy="16" r="16.500" fill="#65d26e"/><g fill="none" stroke="#15211a" stroke-linecap="round"><path stroke-width="3" d="M7 11q10-3 19 2"/><path stroke-width="2.600" d="M8 16.500q9-2.500 16.500 1.800"/><path stroke-width="2.200" d="M8.500 21.500q8-2 14 1.600"/></g></svg></div>
  <span class="dock-divider"></span>
  <div class="thumb"><svg viewBox="0 0 43 60"><path fill="#4ea8dc" d="M9 13h26v18H9z"/><path fill="#efefec" d="M8 9h18l8 9v27H8z"/><path fill="#b9bb2e" d="M18.500 11h6v33h-6z"/><path fill="#d4d4d2" d="M9 12h4v32H9zM28 20h5v24h-5z"/><path fill="#fff" stroke="#bbb" stroke-width=".5" d="M25 9l9 10h-9z"/><text x="21" y="42" class="xlsx">XLSX</text></svg></div>
  <div class="thumb"><svg><use href="#winA"/></svg></div>
  <div class="thumb"><svg><use href="#winB"/></svg></div>
  <div class="thumb"><svg><use href="#winC"/></svg></div>
  <div class="thumb"><svg><use href="#winA"/></svg></div>
  <div class="thumb"><svg><use href="#winB"/></svg></div>
  <div class="thumb"><svg><use href="#winB"/></svg></div>
  <div class="thumb"><svg><use href="#winA"/></svg></div>
  <div class="thumb"><svg><use href="#winB"/></svg></div>
  <div class="thumb"><svg><use href="#winC"/></svg></div>
  <div class="thumb"><svg><use href="#winC"/></svg></div>
  <div class="thumb"><svg><use href="#winB"/></svg></div>
  <div class="thumb"><svg><use href="#winC"/></svg></div>
  <div class="thumb"><svg><use href="#winB"/></svg></div>
  <div class="thumb"><svg><use href="#winA"/></svg></div>
  <div class="thumb"><svg><use href="#winB"/></svg></div>
  <div class="thumb"><svg viewBox="0 0 43 60"><use href="#win" x="2.500" y="18" width="38" height="18"/><path d="M12 24h26M12 30h26M12 36h14" stroke="#e6e6e6" stroke-width="4" stroke-dasharray="2.200 3.200"/><use href="#finder" x="27.500" y="32" width="12" height="12"/></svg></div>
  <div class="thumb"><svg><use href="#winC"/></svg></div>
  <div class="thumb"><svg><use href="#winC"/></svg></div>
  <div class="thumb"><svg viewBox="0 0 43 60"><path fill="#222" d="M2 12h38v2H2z"/><path fill="#020202" d="M2 13h38v25H2z"/><path fill="#1c1c1c" d="M2 38h38v4H2z"/><use href="#booth" x="27" y="32" width="13" height="13"/></svg></div>
  <div class="thumb"><svg viewBox="0 0 43 60"><rect x="2.500" y="11.500" width="39" height="30" fill="#141516" stroke="#9a9c9c" stroke-width="1.200"/><path d="M5 14.500h12M5 17h18M5 19.500h14M5 22h30M5 24.500h26M5 27h20M5 29.500h28M5 32h22M5 34.500h30M5 37h18" stroke="#5f6465" stroke-width="1"/><circle cx="36.500" cy="45" r="5" fill="#151a17"/><path d="M34 46h5" stroke="#888"/></svg></div>
  <div class="thumb"><svg viewBox="0 0 43 60"><rect x="11" y="5" width="21" height="40" rx="1" fill="#2c2d2f"/><text x="30" y="18" class="calc-value">5950</text><g fill="#6a6c6e"><circle cx="13.500" cy="23" r="2.200"/><circle cx="18.500" cy="23" r="2.200"/><circle cx="23.500" cy="23" r="2.200"/><circle cx="13.500" cy="29" r="2.200"/><circle cx="18.500" cy="29" r="2.200"/><circle cx="23.500" cy="29" r="2.200"/><circle cx="13.500" cy="35" r="2.200"/><circle cx="18.500" cy="35" r="2.200"/><circle cx="23.500" cy="35" r="2.200"/><circle cx="13.500" cy="41" r="2.200"/><circle cx="18.500" cy="41" r="2.200"/><circle cx="23.500" cy="41" r="2.200"/></g><g fill="#f09a37"><circle cx="28.500" cy="23" r="2.200"/><circle cx="28.500" cy="29" r="2.200"/><circle cx="28.500" cy="35" r="2.200"/></g><use href="#calc" x="27.500" y="32" width="12" height="12.500"/></svg></div>
  <div class="thumb"><svg viewBox="0 0 43 60"><rect x="2.500" y="13" width="38" height="29" fill="#272829"/><path d="M4 14.500h34M13 18h18" stroke="#5d5f60"/><use href="#gpt" x="27.500" y="32" width="12" height="12"/></svg></div>
  <div class="thumb"><svg viewBox="0 0 43 60"><rect x="3.500" y="8" width="37" height="37" fill="#232425"/><rect x="15" y="9" width="15" height="36" rx="2" fill="#0b0b0c"/><path d="M17 16h10M18 22h8M18 30h8" stroke="#4d3b3f"/><use href="#shot" x="29" y="32" width="12" height="12"/></svg></div>
  <div class="thumb"><svg viewBox="0 0 43 60"><rect x="2.500" y="17" width="38" height="21" fill="#232529"/><rect x="13" y="19" width="16" height="19" fill="#060608"/><path fill="#6d3a7d" d="M13 34q8-4 16 0v4H13z"/><path d="M18 28h7" stroke="#ddd" stroke-width="2"/><use href="#shot" x="28" y="32" width="12" height="12"/></svg></div>
  <div class="thumb"><svg viewBox="0 0 43 60"><rect x="4" y="6" width="35" height="39" fill="#3a3836"/><rect x="5" y="8" width="33" height="37" fill="#e0d6ca"/><path d="M14 18h14M11 21.500h22M10 25h24M10 28.500h24M11 32h17M15 35.500h8" stroke="#75695e" stroke-width="1.300"/><use href="#shot" x="28" y="32" width="12" height="12"/></svg></div>
  <div class="thumb"><svg viewBox="0 0 43 60"><rect x="4" y="12" width="36" height="31" fill="#f3f5f6"/><path d="M4 12h36" stroke="#333" stroke-width="2"/><path d="M8 16.500h10" stroke="#4a63d8" stroke-width="3.500"/><path d="M18 16.500h9" stroke="#44a6c9" stroke-width="3.500"/><path d="M27 16.500h9" stroke="#54b860" stroke-width="3.500"/><path d="M10 21h26M10 25h20M10 29h14M10 34h4" stroke="#b9dbcf" stroke-width="2.400" stroke-dasharray="4 3"/><use href="#shot" x="28" y="32" width="12" height="12"/></svg></div>
  <div class="thumb"><svg viewBox="0 0 43 60"><rect x="3" y="5" width="37" height="40" fill="#202122"/><path d="M6 9h12M6 12h14M6 16h30M6 22h8" stroke="#454748"/><path d="M33 6h6" stroke="#e2603a" stroke-width="1.500"/><path d="M32 13.500h4.500" stroke="#2d70d8" stroke-width="2"/><use href="#postman" x="27.500" y="32" width="12" height="12"/></svg></div>
  <div class="thumb"><svg viewBox="0 0 43 60"><rect x="3" y="13" width="38" height="29" fill="#32323b"/><path d="M4 15h34" stroke="#51515d"/><use href="#brave" x="27.500" y="32" width="12" height="12"/></svg></div>
  <div class="thumb"><svg viewBox="0 0 43 60"><rect x="3" y="8" width="37" height="36" fill="#1b1e1d"/><path d="M8 11v30" stroke="#7c6a58" stroke-width="2" stroke-dasharray="2 2"/><path d="M11 12h10M11 16h8M11 20h9M11 24h7M11 28h9M11 33h8M26 10h10" stroke="#5b5f5d"/><path d="M30 15h8M27 22h9M28 26h8" stroke="#2c5f45" stroke-width="2"/><use href="#whatsapp" x="28" y="32" width="12" height="12"/></svg></div>
  <div class="thumb"><svg viewBox="0 0 43 60"><path fill="#e6e6e4" d="M8.500 14l3-6 4 1 4-2 4 2 5-2 3 4 3 3z"/><path d="M12 10l4 2M20 9l3 3M27 10l3 3" stroke="#b05f50" stroke-width="1.500"/><path fill="url(#gTrash)" d="M7.500 13.500h28l-3.500 28q-.5 3.500-10.500 3.500T11 41.500z"/><ellipse cx="21.500" cy="13.500" rx="14" ry="2.200" fill="none" stroke="#d7dadb" stroke-width="1.200"/></svg></div>
</footer>
</body>
</html>
```
FILE: styles.css
```
* { box-sizing: border-box; }
i, em { font-style: normal; }
body {
  margin: 0;
  width: 2880px;
  height: 1800px;
  overflow: hidden;
  display: flex;
  flex-direction: column;
  font-family: Inter, "Liberation Sans", sans-serif;
  color: #fff;
  background:
    radial-gradient(60px 40px at 1340px 1795px, #3a4a36, transparent),
    radial-gradient(160px 30px at 800px 1798px, #2e4422, transparent),
    radial-gradient(200px 30px at 1080px 1798px, #30451f, transparent),
    radial-gradient(24px 30px at 2540px 1796px, #a87558, transparent),
    radial-gradient(120px 30px at 1600px 1798px, #3a2218, transparent),
    linear-gradient(90deg, #17250f, #1a2a16 50%, #14130f 55%, #12100f 78%, #1b2a20 82%, #131b1c);
}
.defs { position: absolute; }

/* Menu bar */
.menubar {
  flex: none;
  height: 48px;
  display: flex;
  align-items: center;
  background: linear-gradient(90deg, #4b5043, #4a4e42 45%, #42463f 70%, #3f4643);
  font-size: 26px;
}
.menubar-apple { width: 31px; height: 31px; margin: 0 0 1px 38px; }
.menus { display: flex; margin-left: 39px; line-height: 46px; padding-bottom: 2px; }
.menu { white-space: nowrap; font-weight: 500; letter-spacing: -.4px; }
.menu-app { width: 142px; font-weight: 700; letter-spacing: -.1px; }
.menu-file { width: 84px; }
.menu-edit { width: 88px; }
.menu-view { width: 100px; }
.menu-history { width: 128px; }
.menu-bookmarks { width: 176px; }
.menu-profiles { width: 132px; }
.menu-tab { width: 84px; }
.menu-window { width: 138px; }
.status { display: flex; align-items: center; margin-left: auto; width: 927px; }
.status svg { flex: none; }
.clock { margin-left: 21px; display: flex; gap: 16.5px; white-space: nowrap; line-height: 46px; padding-bottom: 2px; font-weight: 500; color: #ececec; letter-spacing: -.35px; }
.time { letter-spacing: 1.25px; }

/* Browser window */
.window {
  position: relative;
  flex: none;
  margin-top: 2px;
  height: 1676px;
  border-radius: 20px;
  overflow: hidden;
  display: flex;
  flex-direction: column;
  background: #43373c;
}
.window::after {
  content: "";
  position: absolute;
  inset: 0;
  border-radius: 20px;
  box-shadow: inset 0 0 0 2px rgba(255, 255, 255, .22);
}
.tabstrip { flex: none; height: 80px; display: flex; align-items: center; }
.lights { width: 184px; padding-left: 42px; display: flex; gap: 16px; }
.lights i { width: 24px; height: 24px; border-radius: 50%; }
.red { background: #ed6a5e; }
.yellow { background: #f5bf4f; }
.green { background: #61c554; }
.tab { width: 476px; padding-left: 16px; display: flex; align-items: center; font-size: 24px; font-weight: 500; }
.favicon { flex: none; width: 32px; height: 32px; margin-right: 16px; }
.tab-title { flex: none; width: 344px; white-space: nowrap; line-height: 36px; letter-spacing: -.2px; }
.fade { letter-spacing: -.25px; -webkit-mask-image: linear-gradient(90deg, #000 86%, transparent 97%); mask-image: linear-gradient(90deg, #000 86%, transparent 97%); }
.tab-close { flex: none; width: 24px; height: 24px; margin-left: 12px; }
.tab-divider { flex: none; width: 4px; height: 32px; margin-left: 24px; border-radius: 2px; background: #66545c; }
.tab.active {
  position: relative;
  width: 464px;
  height: 68px;
  align-self: flex-end;
  padding-bottom: 12px;
  border-radius: 20px 20px 0 0;
  background: #66545c;
}
.tab.active::before, .tab.active::after {
  content: "";
  position: absolute;
  bottom: 0;
  width: 24px;
  height: 24px;
}
.tab.active::before { left: -24px; background: radial-gradient(circle at 0 0, transparent 23.5px, #66545c 24.5px); }
.tab.active::after { right: -24px; background: radial-gradient(circle at 100% 0, transparent 23.5px, #66545c 24.5px); }
.new-tab { width: 24px; height: 24px; margin-left: 28px; }
.tab-search {
  width: 56px;
  height: 56px;
  margin: 0 12px 0 auto;
  padding: 0;
  display: grid;
  place-items: center;
  border: 0;
  border-radius: 20px;
  background: #66545c;
}
.toolbar {
  flex: none;
  height: 92px;
  padding-left: 8px;
  display: flex;
  align-items: center;
  background: #66545c;
  border-radius: 16px 16px 0 0;
}
.tool { flex: none; width: 72px; height: 72px; }
.tool-pen { width: 73px; margin-left: 16px; }
.omnibox {
  width: 2292px;
  height: 68px;
  margin-left: 16px;
  padding: 0 16px 0 10px;
  display: flex;
  align-items: center;
  border-radius: 34px;
  background: #50454a;
}
.site-info { width: 48px; height: 48px; border-radius: 50%; display: grid; place-items: center; background: #66545c; }
.url { margin: 0 auto 0 16px; font-size: 28px; line-height: 40px; }
.port { color: #b9b1b5; letter-spacing: .2px; }
.omni-icon { width: 64px; height: 64px; }
.tool-divider { width: 4px; height: 32px; margin-left: 14px; border-radius: 2px; background: #43373c; }
.avatar { width: 40px; height: 40px; margin-left: 33px; border-radius: 50%; background: #3f95a7; font-size: 21px; line-height: 41px; text-align: center; }
.tool-more { margin-left: 16px; }
.bookmarks {
  flex: none;
  height: 70px;
  padding: 0 0 12px 38px;
  display: flex;
  align-items: center;
  background: #66545c;
  border-bottom: 2px solid #8d7882;
  font-size: 24px;
  font-weight: 500;
}
.bm-divider { width: 4px; height: 32px; margin: 0 30px; border-radius: 2px; background: #43373c; }
.bm { display: flex; align-items: center; gap: 12px; white-space: nowrap; line-height: 36px; }
.bm-label { letter-spacing: -.27px; }
.bm-tight { letter-spacing: -.45px; }
.bm-loose { letter-spacing: -.12px; }
.bm-courses { width: 211px; }
.bm-mid { width: 308px; }
.bm-wide { width: 923px; }
.bm-oracle { width: 258px; }
.dmark { width: 30px; height: 32px; margin-right: 1px; }
.apna { width: 30px; display: flex; flex-direction: column; align-items: center; font: 900 7px/6px "Roboto", sans-serif; color: #17140f; }
.apna em + em { color: #e8a33a; letter-spacing: -.3px; }

/* Dimmed page */
.page {
  flex: 1;
  padding-top: 268px;
  background: linear-gradient(#666 96%, #5f5f5f);
  color: #000;
}
.complaint { display: flex; align-items: flex-end; margin-left: 1174.5px; font-size: 32px; }
.complaint label { width: 164.5px; line-height: 40px; margin-bottom: -9px; white-space: nowrap; letter-spacing: -.55px; }
.textarea {
  position: relative;
  width: 366px;
  height: 84px;
  padding: 14px 5px;
  border: 2px solid #303030;
  border-radius: 4px;
  font: 26.67px/31px "DejaVu Sans Mono", monospace;
}
.grip { position: absolute; right: 1px; bottom: 2px; }
.submit {
  width: 114px;
  height: 43px;
  margin: 46px auto 0;
  border: 2px solid #303030;
  border-radius: 5px;
  background: #636363;
  font: 26.67px/39px "Liberation Sans", sans-serif;
  text-align: center;
}

/* Alert dialog */
.dialog {
  position: absolute;
  left: 992px;
  top: 166px;
  width: 896px;
  height: 368px;
  padding: 41px 40px;
  border-radius: 24px;
  background: #211b1d;
  color: #ecdfe4;
  box-shadow: 0 0 0 1px #0e0b0c, 0 8px 40px rgba(0, 0, 0, .45);
}
.dialog h1 { margin: 0 0 16px; font-size: 32px; line-height: 48px; font-weight: 500; letter-spacing: .28px; white-space: nowrap; }
.dialog p { margin: 0; font-size: 26px; line-height: 40px; letter-spacing: -.06px; white-space: nowrap; }
.ok {
  display: block;
  width: 128px;
  height: 72px;
  margin: 31px 0 0 auto;
  border-radius: 36px;
  background: #f3b0d8;
  color: #4f1f42;
  font-size: 26px;
  font-weight: 500;
  line-height: 73px;
  text-align: center;
}

/* Dock */
.dock {
  flex: none;
  width: 2824px;
  height: 60px;
  margin: 4px 0 0 28px;
  padding-left: 4px;
  display: flex;
  border-radius: 16px;
  background: linear-gradient(90deg, #1e231a, #1d211d 30%, #262a1c 40%, #1f1c17 55%, #1d1b17 75%, #1b211e 82%, #2c2a1c 88%, #1a2022);
  box-shadow: inset 0 0 0 2px rgba(255, 255, 255, .18), 0 0 0 2px rgba(0, 0, 0, .5);
}
.app, .thumb { position: relative; flex: none; width: 43.44px; height: 60px; }
.app { padding-top: 10px; display: flex; flex-direction: column; align-items: center; }
.app svg { width: 32px; height: 32px; overflow: visible; }
.thumb svg { width: 43px; height: 60px; display: block; }
.running::after { content: ""; width: 6px; height: 6px; margin-top: 8px; border-radius: 50%; background: #9fa29b; }
.dock-divider { flex: none; width: 2px; height: 44px; margin: 8px 8.3px; background: #5a5d55; }
.badge {
  position: absolute;
  right: -1px;
  top: 6px;
  width: 16px;
  height: 16px;
  border-radius: 50%;
  background: #e34c3f;
  font-size: 9px;
  line-height: 16px;
  text-align: center;
}
.calendar span { width: 32px; height: 10px; border-radius: 7px 7px 0 0; background: #e35247; font-size: 7px; font-weight: 600; line-height: 11px; text-align: center; }
.calendar b { width: 32px; height: 22px; border-radius: 0 0 7px 7px; background: #f7f6f4; color: #222; font-size: 19px; font-weight: 400; line-height: 21px; text-align: center; }
.tv { fill: #fff; font-size: 12px; }
.letter { fill: #fff; font-size: 8.5px; font-weight: 700; text-anchor: middle; }
.xlsx { fill: #555; font-size: 6px; text-anchor: middle; }
.calc-value { fill: #ddd; font-size: 6px; text-anchor: end; }
```
